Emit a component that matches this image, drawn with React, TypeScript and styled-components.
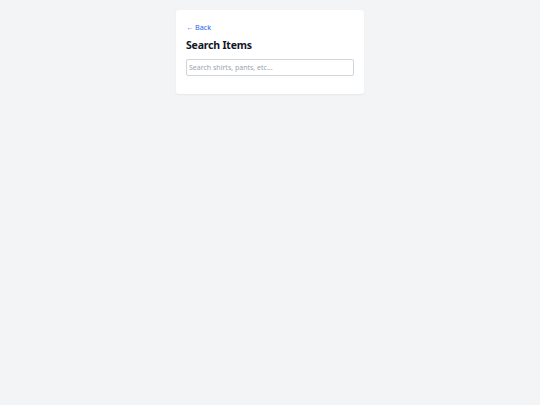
import React from "react";
import styled, { createGlobalStyle } from "styled-components";

const Global = createGlobalStyle`
  html, body { margin: 0; padding: 0; background: #f3f4f6; }
  body { font-family: "Noto Sans", "Open Sans", sans-serif; }
  * { box-sizing: border-box; }
`;

const Page = styled.div`
  min-height: 405px;
  background: #f3f4f6;
  display: flex;
  justify-content: center;
  align-items: flex-start;
  padding-top: 10px;
`;

const Card = styled.div`
  width: 188px;
  background: #ffffff;
  border-radius: 3px;
  box-shadow: 0 1px 2px rgba(0, 0, 0, 0.06);
  padding: 10px 10px 18px;
  display: flex;
  flex-direction: column;
`;

const BackLink = styled.a`
  color: #2563eb;
  font-size: 7.2px;
  line-height: 12px;
  margin-top: 1px;
  text-decoration: none;
  align-self: flex-start;
  cursor: pointer;
`;

const Title = styled.h1`
  margin: 5px 0 7px;
  font-size: 10.5px;
  letter-spacing: -0.2px;
  line-height: 14px;
  font-weight: 700;
  color: #111827;
`;

const SearchInput = styled.input`
  width: 100%;
  height: 17px;
  border: 1px solid #d1d5db;
  border-radius: 2px;
  padding: 0 2px;
  font-family: inherit;
  font-size: 7px;
  color: #111827;
  outline: none;
  &::placeholder { color: #9ca3af; }
`;

export default function App() {
  return (
    <>
      <Global />
      <Page>
        <Card>
          <BackLink>← Back</BackLink>
          <Title>Search Items</Title>
          <SearchInput placeholder="Search shirts, pants, etc..." />
        </Card>
      </Page>
    </>
  );
}
